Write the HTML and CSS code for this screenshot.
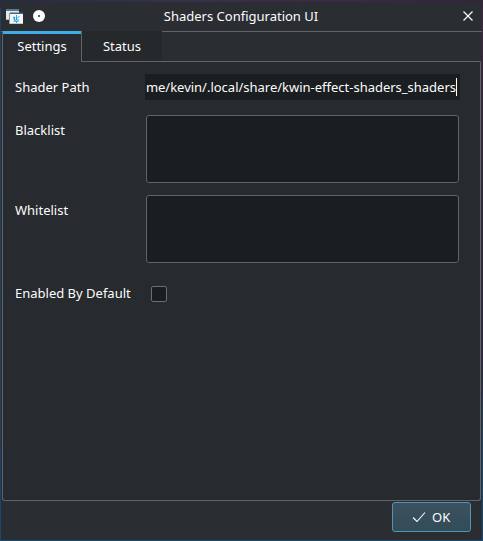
FILE: index.html
```html
<!DOCTYPE html>
<html lang="en">
<head>
<meta charset="utf-8">
<title>Shaders Configuration UI</title>
<link rel="stylesheet" href="styles.css">
</head>
<body>
<main class="window">
  <header class="titlebar">
    <svg class="app-icon" width="18" height="17" viewBox="0 0 18 17">
      <path fill="#e4e9eb" d="M0 0h13v11H0z"/>
      <path fill="#577b8c" d="M0 0h13v2H0z"/>
      <path fill="#a9b5bb" d="M0 10h13v1H0z"/>
      <path fill="#f4f6f7" d="M4 4h13v11H4z"/>
      <path fill="#8997a0" d="M3 4h1v11H3zM4 14.500h13v.5H4z"/>
      <path fill="#466879" d="M4 3.500h13v1.500H4z"/>
      <path fill="none" stroke="#2da5e4" stroke-width="1.400" d="M9 8a2.300 2.300 0 1 0 3.500 3.500"/>
      <path fill="none" stroke="#2da5e4" stroke-width="1" d="M10.500 6v5M11 9.500l2.500-2.500M11 9.500l2 2M7 8l1 .5M7.500 13l1-1M10.500 12.500v1.500"/>
    </svg>
    <svg class="pin" width="12" height="12" viewBox="0 0 12 12">
      <circle cx="6" cy="6" r="6" fill="#fcfcfc"/>
      <circle cx="6" cy="6" r="1" fill="#2a2e32"/>
    </svg>
    <h1 class="title">Shaders Configuration UI</h1>
    <svg class="close" width="10" height="10" viewBox="0 0 10 10">
      <path fill="none" stroke="#fcfcfc" stroke-width="1.200" d="M.5.5l9 9M9.500.5l-9 9"/>
    </svg>
  </header>
  <nav class="tabs">
    <div class="tab active">Settings</div>
    <div class="tab">Status</div>
    <div class="tab-rest"></div>
  </nav>
  <section class="panel">
    <div class="row path-row"><span class="label">Shader Path</span><div class="path"><span>me/kevin/.local/share/kwin-effect-shaders_shaders</span><i class="caret"></i></div></div>
    <div class="row list-row"><span class="label">Blacklist</span><div class="area"></div></div>
    <div class="row list-row"><span class="label">Whitelist</span><div class="area"></div></div>
    <div class="row check-row"><span class="label">Enabled By Default</span><div class="check"></div></div>
  </section>
  <footer class="footer">
    <div class="ok">
      <svg width="14" height="12" viewBox="0 0 14 12"><path fill="none" stroke="#fcfcfc" stroke-width="1.100" d="M1 6.500l4 4L13 1.500"/></svg>
      <span>OK</span>
    </div>
  </footer>
</main>
</body>
</html>
```
FILE: styles.css
```css
* { box-sizing: border-box; }
body {
  margin: 0;
  width: 483px;
  height: 541px;
  padding: 2px 1px 1px;
  overflow: hidden;
  background:
    linear-gradient(90deg, #272b40, #343149 35%, #3d2944 70%, #33243a) 0 0 / 100% 8px no-repeat,
    linear-gradient(90deg, #24405f 50%, transparent 50%) 0 0 / 100% 440px no-repeat,
    linear-gradient(#3b2740, #30263f 65%, #194369 85%, #194a70);
  font: 13px/18px "Noto Sans", sans-serif;
  color: #fcfcfc;
}
.window {
  display: flex;
  flex-direction: column;
  width: 481px;
  height: 538px;
  border-radius: 4px 4px 0 0;
  background: #2a2e32;
}
.titlebar {
  display: flex;
  align-items: center;
  height: 30px;
  padding: 0 9px 0 5px;
  border-bottom: 1px solid #606467;
}
.app-icon { margin-top: 1px; }
.pin { margin: -1px 0 0 9px; }
.title {
  flex: 1;
  margin: -2px 0 0;
  padding-right: 26px;
  text-align: center;
  font-size: 13px;
  font-weight: 400;
  line-height: 18px;
}
.close { margin-top: -1px; }
.tabs {
  display: flex;
  height: 31px;
  margin: -1px 0 -1px 1px;
  padding-right: 1px;
  position: relative;
}
.tab {
  width: 80px;
  padding-top: 6px;
  text-align: center;
  background: #25292c;
  border-bottom: 1px solid #606467;
}
.tab.active {
  padding-top: 3px;
  background: #272a2e;
  border: 1px solid #606467;
  border-top: 3px solid #3daee9;
  border-bottom: 0;
  border-radius: 2px 2px 0 0;
}
.tab-rest {
  flex: 1;
  border-top: 1px solid #606467;
  border-bottom: 1px solid #606467;
}
.panel {
  height: 440px;
  width: 479px;
  margin-left: 1px;
  padding: 12px;
  border: 1px solid #606467;
  border-top: 0;
  border-radius: 0 3px 3px 3px;
  background: #272a2e;
}
.row { display: flex; }
.label { width: 131px; white-space: nowrap; }
.path-row { padding-top: 1px; height: 42px; }
.path-row .label { padding-top: 4px; }
.path {
  display: flex;
  align-items: center;
  justify-content: flex-end;
  width: 315px;
  height: 26px;
  margin-left: -1px;
  padding-right: 3px;
  white-space: nowrap;
  background: #1b1e20;
}
.path span { flex: none; letter-spacing: -0.01px; }
.caret { flex: none; width: 1px; height: 18px; background: #fcfcfc; }
.list-row { height: 80px; }
.list-row .label { padding-top: 6px; }
.area {
  width: 313px;
  height: 68px;
  border: 1px solid #606467;
  border-radius: 3px;
  background: #1b1e20;
}
.check-row { padding-top: 9px; }
.check {
  width: 16px;
  height: 16px;
  margin: 2px 0 0 5px;
  border: 1px solid #6b6f71;
  border-radius: 2px;
  background: #1b1e20;
}
.footer {
  display: flex;
  justify-content: flex-end;
  padding: 1px 11px 0 0;
}
.ok {
  display: flex;
  align-items: center;
  gap: 6px;
  width: 79px;
  height: 30px;
  padding-left: 19px;
  border: 1px solid #5394b2;
  border-radius: 3px;
  background: linear-gradient(#3b515f, #324c58);
}
```
